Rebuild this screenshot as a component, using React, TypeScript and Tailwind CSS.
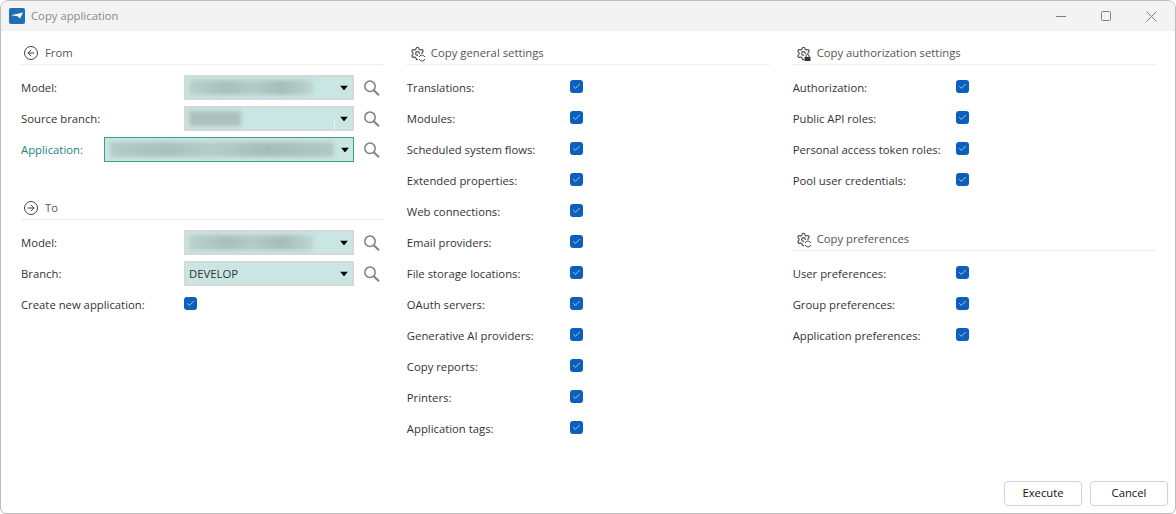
import { ArrowLeft, ArrowRight, Settings, Check } from 'lucide-react'

const font = "font-['Open_Sans','Liberation_Sans',sans-serif]"

function Gear({ lock }: { lock?: boolean }) {
  return (
    <span className="relative h-[15px] w-[15px] shrink-0">
      <Settings size={15} strokeWidth={1.8} className="text-[#4a4a4a]" />
      <span className="absolute -bottom-[1px] -right-[1px] flex h-[8px] w-[8px] items-center justify-center bg-white">
        {lock ? (
          <svg width="7" height="7" viewBox="0 0 7 7">
            <path d="M2 3V2a1.5 1.5 0 0 1 3 0v1" fill="none" stroke="#333" />
            <rect x="0.5" y="3" width="6" height="4" fill="#333" />
          </svg>
        ) : (
          <svg width="8" height="8" viewBox="0 0 8 8" fill="none" stroke="#4a4a4a" strokeWidth="1">
            <path d="M1 3a3 3 0 0 1 5-1l1 1M7 5a3 3 0 0 1-5 1L1 5" />
          </svg>
        )}
      </span>
    </span>
  )
}

function CircleArrow({ dir }: { dir: 'left' | 'right' }) {
  return (
    <span className="flex h-[14px] w-[14px] shrink-0 items-center justify-center rounded-full border-[1.3px] border-[#404040]">
      {dir === 'left' ? (
        <ArrowLeft size={10} strokeWidth={2.4} className="text-[#404040]" />
      ) : (
        <ArrowRight size={10} strokeWidth={2.4} className="text-[#404040]" />
      )}
    </span>
  )
}

function SectionHead({ icon, title, indent }: { icon: React.ReactNode; title: string; indent: string }) {
  return (
    <div className={`flex h-[24px] items-center border-b border-[#eeeeee] pt-[1px] text-[#555555] ${indent}`}>
      {icon}
      <span>{title}</span>
    </div>
  )
}

function SearchGlyph() {
  return (
    <svg width="18" height="16" viewBox="0 0 18 16" fill="none" className="ml-[9px] mr-[2px] shrink-0">
      <circle cx="7" cy="6.3" r="5.2" stroke="#7f7f7f" strokeWidth="1.5" />
      <path d="M10.8 10.2 16 15.2" stroke="#7f7f7f" strokeWidth="1.9" />
    </svg>
  )
}

function Combo({ blur, value, focus, cursor }: { blur?: string; value?: string; focus?: boolean; cursor?: boolean }) {
  return (
    <div className={`relative flex h-[25px] min-w-0 flex-1 items-center bg-[#c9e6e3] ${focus ? 'border border-[#3c9d8c]' : 'border-2 border-[#d6d9d8]'}`}>
      {value && <span className="pl-[3px] pt-[1px] text-[#333333]">{value}</span>}
      {blur && <div className={`h-[15px] blur-[2px] ${blur}`} />}
      <svg width="8" height="5" viewBox="0 0 8 5" className="absolute right-[4px] top-1/2 -translate-y-1/2 fill-black">
        <path d="M0 0h8L4 5z" />
      </svg>
      {cursor && (
        <span className="absolute -bottom-[5px] right-[17px] h-[15px] w-[1px] bg-[#eeeeee]" />
      )}
    </div>
  )
}

function SelectRow({ label, blur, value, focus, cursor }: { label: string; blur?: string; value?: string; focus?: boolean; cursor?: boolean }) {
  return (
    <div className="flex h-[25px] items-center">
      <span className={focus ? 'w-[83px] shrink-0 pt-[1px] text-[#17857a]' : 'w-[163px] shrink-0 pt-[1px] text-[#333333]'}>{label}</span>
      <Combo blur={blur} value={value} focus={focus} cursor={cursor} />
      <SearchGlyph />
    </div>
  )
}

function CheckRow({ label }: { label: string }) {
  return (
    <div className="flex h-[25px] items-center">
      <span className="w-[163px] shrink-0 pt-[2px] text-[#333333]">{label}</span>
      <span className="-mt-[2px] flex h-[13px] w-[13px] items-center justify-center rounded-[3px] bg-[#0b5fbd]">
        <Check size={9} strokeWidth={2} className="text-[#dbe8f7]" />
      </span>
    </div>
  )
}

const general = [
  'Translations:',
  'Modules:',
  'Scheduled system flows:',
  'Extended properties:',
  'Web connections:',
  'Email providers:',
  'File storage locations:',
  'OAuth servers:',
  'Generative AI providers:',
  'Copy reports:',
  'Printers:',
  'Application tags:',
]

const modelBlur =
  'ml-[3px] w-[124px] bg-[linear-gradient(90deg,#b9d0cc,#a9bfba_30%,#b4cac6_52%,#a6bcb7_75%,#bcd5d1)]'
const appBlur =
  'ml-[5px] w-[224px] bg-[linear-gradient(90deg,#b4cac6,#a9bfba_25%,#b6ccc8_45%,#a6bcb7_70%,#b2c8c4)]'

export default function App() {
  return (
    <div className={`flex h-[514px] w-[1176px] flex-col overflow-hidden rounded-t-[8px] rounded-b-[6px] border border-[#bdbdbd] bg-white text-[11.3px] ${font}`}>
      {/* Title bar */}
      <div className="flex h-[30px] shrink-0 items-center bg-[#f3f3f3] pl-[8px]">
        <svg width="16" height="16" viewBox="0 0 16 16" className="shrink-0">
          <rect width="16" height="16" rx="2" fill="#1f6fb2" />
          <path d="M2 7.2 14 4.5l-3 6-2.4-2.2z" fill="#ffffff" />
        </svg>
        <span className="ml-[6px] text-[#8a8a8a]">Copy application</span>
        <div className="ml-auto mr-[18px] flex items-center gap-[35px]">
          <svg width="10" height="10" viewBox="0 0 10 10" stroke="#808080"><path d="M0 5.5h10" /></svg>
          <svg width="10" height="10" viewBox="0 0 10 10" fill="none" stroke="#808080"><rect x="0.5" y="0.5" width="9" height="9" rx="1" /></svg>
          <svg width="11" height="11" viewBox="0 0 11 11" stroke="#808080"><path d="M.5.5l10 10M10.5.5l-10 10" /></svg>
        </div>
      </div>

      {/* Body */}
      <div className="grid flex-1 grid-cols-3 gap-x-[23.5px] pl-[20px] pr-[20px] pt-[10px]">
        <div className="flex flex-col">
          <SectionHead title="From" indent="gap-[7px] pl-[3px]" icon={<CircleArrow dir="left" />} />
          <div className="mt-[10px] flex flex-col gap-[6px]">
            <SelectRow label="Model:" blur={modelBlur} />
            <SelectRow label="Source branch:" blur="ml-[3px] w-[52px] bg-[#adc0bc]" cursor />
            <SelectRow label="Application:" blur={appBlur} focus />
          </div>
          <div className="mt-[34px]">
            <SectionHead title="To" indent="gap-[7px] pl-[3px]" icon={<CircleArrow dir="right" />} />
          </div>
          <div className="mt-[10px] flex flex-col gap-[6px]">
            <SelectRow label="Model:" blur={modelBlur} />
            <SelectRow label="Branch:" value="DEVELOP" />
            <CheckRow label="Create new application:" />
          </div>
        </div>

        <div className="flex flex-col">
          <SectionHead title="Copy general settings" indent="gap-[6px] pl-[3px]" icon={<Gear />} />
          <div className="mt-[10px] flex flex-col gap-[6px]">
            {general.map((g) => (
              <CheckRow key={g} label={g} />
            ))}
          </div>
        </div>

        <div className="flex flex-col">
          <SectionHead title="Copy authorization settings" indent="gap-[6px] pl-[3px]" icon={<Gear lock />} />
          <div className="mt-[10px] flex flex-col gap-[6px]">
            <CheckRow label="Authorization:" />
            <CheckRow label="Public API roles:" />
            <CheckRow label="Personal access token roles:" />
            <CheckRow label="Pool user credentials:" />
          </div>
          <div className="mt-[34px]">
            <SectionHead title="Copy preferences" indent="gap-[6px] pl-[3px]" icon={<Gear />} />
          </div>
          <div className="mt-[10px] flex flex-col gap-[6px]">
            <CheckRow label="User preferences:" />
            <CheckRow label="Group preferences:" />
            <CheckRow label="Application preferences:" />
          </div>
        </div>
      </div>

      {/* Footer */}
      <div className="flex shrink-0 justify-end gap-[8px] pb-[7px] pr-[7px]">
        <button className="h-[25px] w-[78px] rounded-[4px] border border-[#d2d2d2] bg-white text-[#111111]">Execute</button>
        <button className="h-[25px] w-[78px] rounded-[4px] border border-[#d2d2d2] bg-white text-[#111111]">Cancel</button>
      </div>
    </div>
  )
}
